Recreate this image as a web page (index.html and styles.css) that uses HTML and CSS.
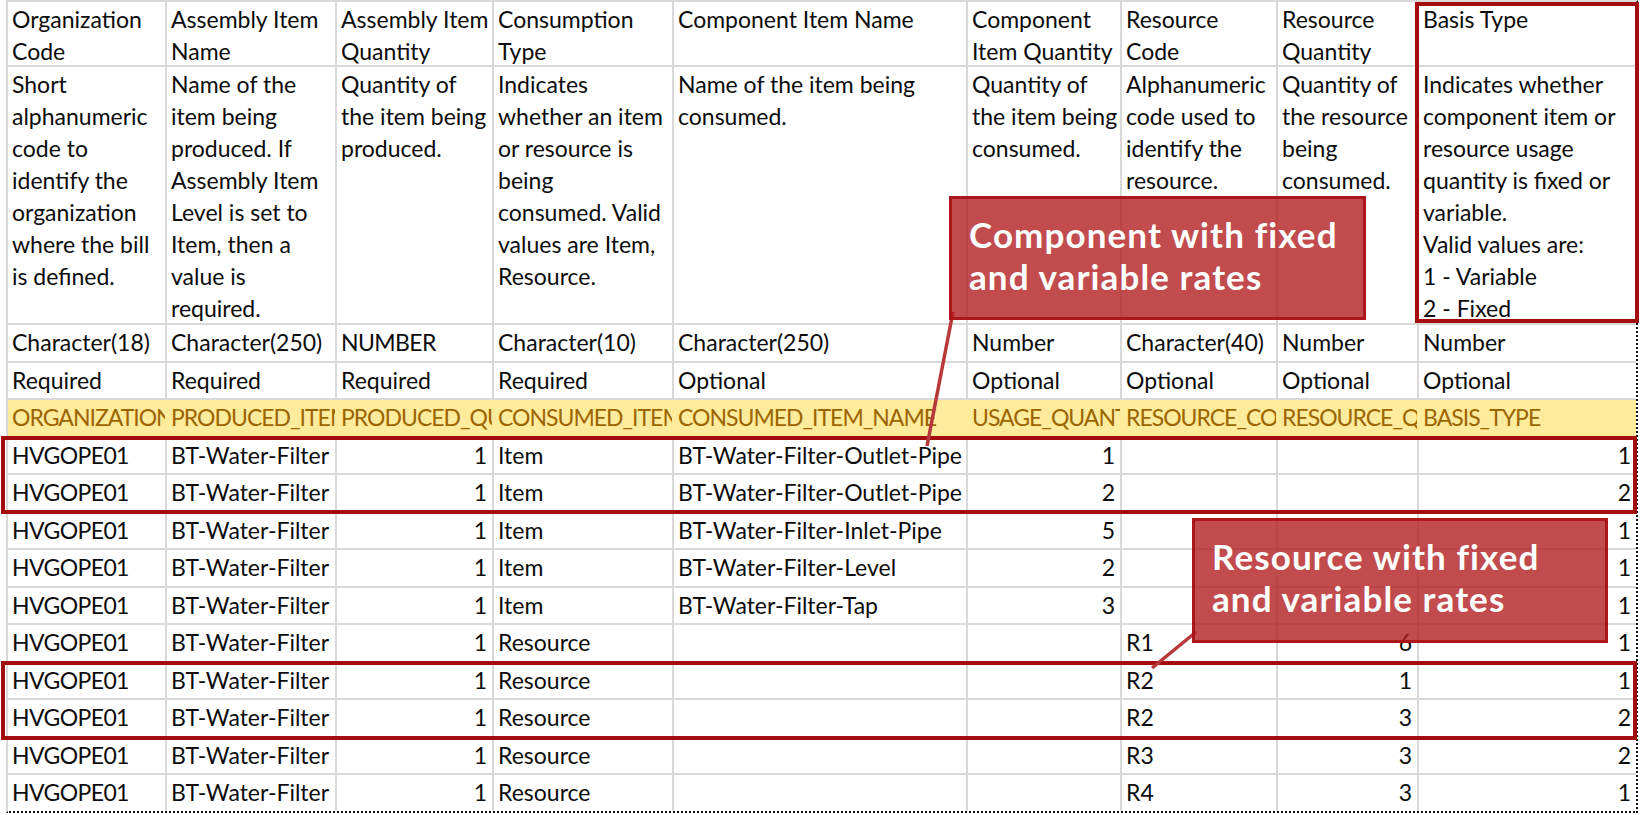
FILE: index.html
```html
<!DOCTYPE html>
<html lang="en">
<head>
<meta charset="utf-8">
<title>Bill of Resources import template</title>
<link rel="stylesheet" href="styles.css">
</head>
<body>
<div class="page">
  <div class="sheet">
    <div class="c">Organization<br>Code</div>
    <div class="c">Assembly Item<br>Name</div>
    <div class="c">Assembly Item<br>Quantity</div>
    <div class="c">Consumption<br>Type</div>
    <div class="c">Component Item Name</div>
    <div class="c">Component<br>Item Quantity</div>
    <div class="c">Resource<br>Code</div>
    <div class="c">Resource<br>Quantity</div>
    <div class="c">Basis Type</div>

    <div class="c">Short<br>alphanumeric<br>code to<br>identify the<br>organization<br>where the bill<br>is defined.</div>
    <div class="c">Name of the<br>item being<br>produced. If<br>Assembly Item<br>Level is set to<br>Item, then a<br>value is<br>required.</div>
    <div class="c">Quantity of<br>the item being<br>produced.</div>
    <div class="c">Indicates<br>whether an item<br>or resource is<br>being<br>consumed. Valid<br>values are Item,<br>Resource.</div>
    <div class="c">Name of the item being<br>consumed.</div>
    <div class="c">Quantity of<br>the item being<br>consumed.</div>
    <div class="c">Alphanumeric<br>code used to<br>identify the<br>resource.</div>
    <div class="c">Quantity of<br>the resource<br>being<br>consumed.</div>
    <div class="c">Indicates whether<br>component item or<br>resource usage<br>quantity is fixed or<br>variable.<br>Valid values are:<br>1 - Variable<br>2 - Fixed</div>

    <div class="c">Character(18)</div>
    <div class="c">Character(250)</div>
    <div class="c caps">NUMBER</div>
    <div class="c">Character(10)</div>
    <div class="c">Character(250)</div>
    <div class="c">Number</div>
    <div class="c">Character(40)</div>
    <div class="c">Number</div>
    <div class="c">Number</div>

    <div class="c">Required</div>
    <div class="c">Required</div>
    <div class="c">Required</div>
    <div class="c">Required</div>
    <div class="c">Optional</div>
    <div class="c">Optional</div>
    <div class="c">Optional</div>
    <div class="c">Optional</div>
    <div class="c">Optional</div>

    <div class="c y">ORGANIZATION</div>
    <div class="c y">PRODUCED_ITEM_NAME</div>
    <div class="c y">PRODUCED_QUANTITY</div>
    <div class="c y">CONSUMED_ITEM_TYPE</div>
    <div class="c y">CONSUMED_ITEM_NAME</div>
    <div class="c y">USAGE_QUANTITY</div>
    <div class="c y">RESOURCE_CODE</div>
    <div class="c y">RESOURCE_QUANTITY</div>
    <div class="c y">BASIS_TYPE</div>

    <div class="c caps">HVGOPE01</div><div class="c">BT-Water-Filter</div><div class="c n">1</div><div class="c">Item</div><div class="c">BT-Water-Filter-Outlet-Pipe</div><div class="c n">1</div><div class="c"></div><div class="c n"></div><div class="c n">1</div>
    <div class="c caps">HVGOPE01</div><div class="c">BT-Water-Filter</div><div class="c n">1</div><div class="c">Item</div><div class="c">BT-Water-Filter-Outlet-Pipe</div><div class="c n">2</div><div class="c"></div><div class="c n"></div><div class="c n">2</div>
    <div class="c caps">HVGOPE01</div><div class="c">BT-Water-Filter</div><div class="c n">1</div><div class="c">Item</div><div class="c">BT-Water-Filter-Inlet-Pipe</div><div class="c n">5</div><div class="c"></div><div class="c n"></div><div class="c n">1</div>
    <div class="c caps">HVGOPE01</div><div class="c">BT-Water-Filter</div><div class="c n">1</div><div class="c">Item</div><div class="c">BT-Water-Filter-Level</div><div class="c n">2</div><div class="c"></div><div class="c n"></div><div class="c n">1</div>
    <div class="c caps">HVGOPE01</div><div class="c">BT-Water-Filter</div><div class="c n">1</div><div class="c">Item</div><div class="c">BT-Water-Filter-Tap</div><div class="c n">3</div><div class="c"></div><div class="c n"></div><div class="c n">1</div>
    <div class="c caps">HVGOPE01</div><div class="c">BT-Water-Filter</div><div class="c n">1</div><div class="c">Resource</div><div class="c"></div><div class="c n"></div><div class="c">R1</div><div class="c n">6</div><div class="c n">1</div>
    <div class="c caps">HVGOPE01</div><div class="c">BT-Water-Filter</div><div class="c n">1</div><div class="c">Resource</div><div class="c"></div><div class="c n"></div><div class="c">R2</div><div class="c n">1</div><div class="c n">1</div>
    <div class="c caps">HVGOPE01</div><div class="c">BT-Water-Filter</div><div class="c n">1</div><div class="c">Resource</div><div class="c"></div><div class="c n"></div><div class="c">R2</div><div class="c n">3</div><div class="c n">2</div>
    <div class="c caps">HVGOPE01</div><div class="c">BT-Water-Filter</div><div class="c n">1</div><div class="c">Resource</div><div class="c"></div><div class="c n"></div><div class="c">R3</div><div class="c n">3</div><div class="c n">2</div>
    <div class="c caps">HVGOPE01</div><div class="c">BT-Water-Filter</div><div class="c n">1</div><div class="c">Resource</div><div class="c"></div><div class="c n"></div><div class="c">R4</div><div class="c n">3</div><div class="c n">1</div>
  </div>

  <div class="hl hl-basis"></div>
  <div class="hl hl-comp"></div>
  <div class="hl hl-res"></div>

  <svg class="pointers" width="1641" height="815" viewBox="0 0 1641 815">
    <line x1="953" y1="312" x2="927" y2="446"/>
    <line x1="1196" y1="632" x2="1152" y2="668"/>
  </svg>

  <div class="callout callout-comp">Component with fixed<br>and variable rates</div>
  <div class="callout callout-res">Resource with fixed<br>and variable rates</div>
</div>
</body>
</html>
```

FILE: styles.css
```css
html, body {
  margin: 0;
  padding: 0;
  background: #ffffff;
}

.page {
  position: relative;
  width: 1641px;
  height: 815px;
  overflow: hidden;
  background: #ffffff;
  font-family: Lato, "Liberation Sans", sans-serif;
}

.sheet {
  display: grid;
  grid-template-columns: 159px 170px 157px 180px 294px 154px 156px 141px 217px;
  grid-template-rows: 65px 258px repeat(12, 37.5px) 36px;
  width: fit-content;
  margin-left: 6px;
  border-top: 2px solid #d9d9d9;
  border-left: 2px solid #d9d9d9;
  border-right: 2px dotted #111111;
  border-bottom: 2px dotted #111111;
}

.c {
  box-sizing: border-box;
  border-right: 2px solid #d9d9d9;
  border-bottom: 2px solid #d9d9d9;
  padding: 1px 5px 0 4px;
  font-size: 23px;
  line-height: 32px;
  color: #0c0c0c;
  white-space: nowrap;
  overflow: hidden;
}

.sheet > .c:nth-child(9n) {
  border-right: none;
}

.sheet > .c:nth-last-child(-n+9) {
  border-bottom: none;
}

.n {
  text-align: right;
}

.caps {
  letter-spacing: -0.6px;
}

.y {
  background: #ffeb9c;
  color: #9c6500;
  border-right-color: #ffeb9c;
  letter-spacing: -1px;
}

.hl {
  position: absolute;
  box-sizing: border-box;
  border: 4px solid #a30d10;
}

.hl-basis {
  left: 1415px;
  top: 2px;
  width: 224px;
  height: 321px;
}

.hl-comp {
  left: 1px;
  top: 436px;
  width: 1636px;
  height: 78px;
}

.hl-res {
  left: 1px;
  top: 661px;
  width: 1636px;
  height: 79px;
}

.pointers {
  position: absolute;
  left: 0;
  top: 0;
  pointer-events: none;
}

.pointers line {
  stroke: #b8373b;
  stroke-width: 3.5;
}

.callout {
  position: absolute;
  box-sizing: border-box;
  background: rgba(178, 30, 32, 0.8);
  border: 3px solid rgba(168, 18, 22, 0.9);
  color: #ffffff;
  font-family: Lato, "Liberation Sans", sans-serif;
  font-weight: 700;
  font-size: 35px;
  line-height: 42px;
  letter-spacing: 1.1px;
  padding: 14px 0 0 17px;
  white-space: nowrap;
}

.callout-comp {
  left: 949px;
  top: 196px;
  width: 417px;
  height: 124px;
}

.callout-res {
  left: 1192px;
  top: 518px;
  width: 416px;
  height: 125px;
}
```
